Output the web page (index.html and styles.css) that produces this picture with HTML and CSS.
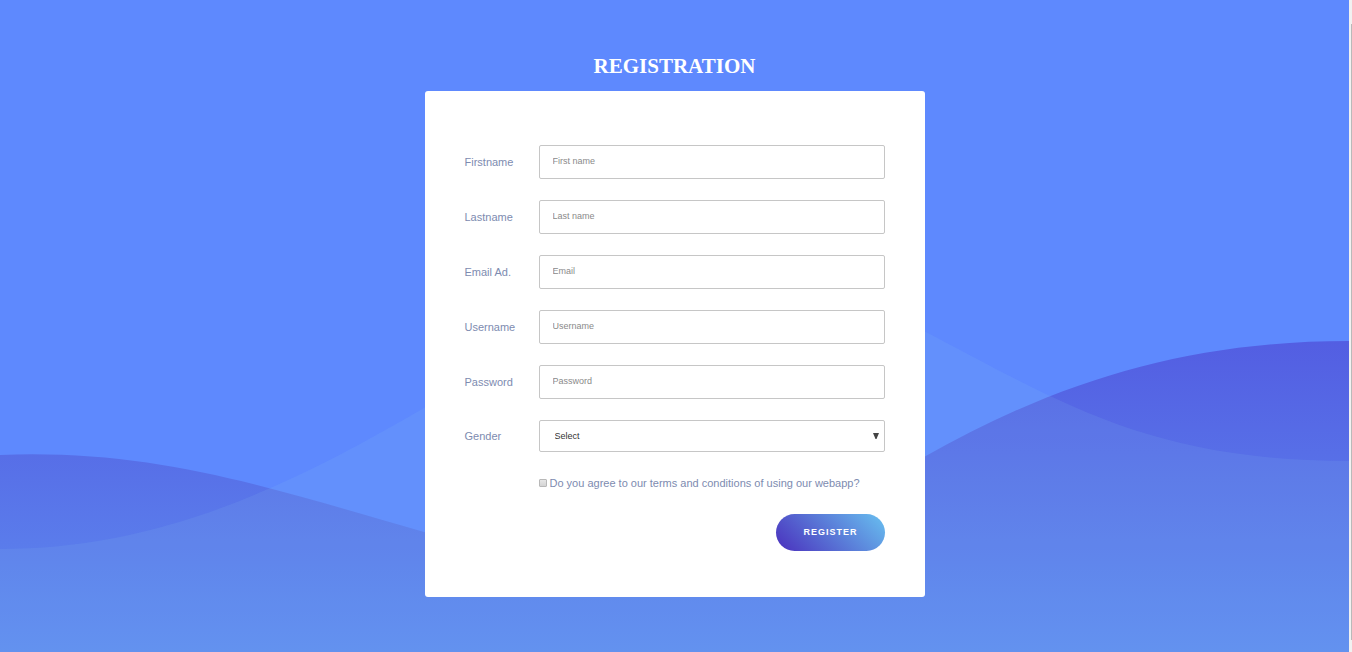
FILE: index.html
```
<!DOCTYPE html>
<html lang="en">
<head>
<meta charset="utf-8">
<meta name="viewport" content="width=device-width, initial-scale=1">
<title>Registration</title>
<link rel="stylesheet" href="styles.css">
</head>
<body>
<div class="page">
  <svg class="waves" viewBox="0 0 1349 652" preserveAspectRatio="none" aria-hidden="true">
    <defs>
      <linearGradient id="deep" gradientUnits="userSpaceOnUse" x1="0" y1="341" x2="0" y2="652">
        <stop offset="0" stop-color="#535ee2"/>
        <stop offset="1" stop-color="#5e8bf0"/>
      </linearGradient>
    </defs>
    <path fill="url(#deep)" d="M0 455C155 449 267 487 424 532C600 590 760 560 924 457C1060 380 1190 341 1349 341V652H0Z"/>
    <path fill="#8cc8f0" fill-opacity=".12" d="M0 549C160 549 290 486 424 408C600 290 750 240 924 331C1060 402 1150 461 1349 461V652H0Z"/>
  </svg>
  <main class="content">
    <h1 class="title">REGISTRATION</h1>
    <form class="card">
      <div class="row">
        <label class="label" for="firstname">Firstname</label>
        <input class="field" id="firstname" type="text" placeholder="First name">
      </div>
      <div class="row">
        <label class="label" for="lastname">Lastname</label>
        <input class="field" id="lastname" type="text" placeholder="Last name">
      </div>
      <div class="row">
        <label class="label" for="email">Email Ad.</label>
        <input class="field" id="email" type="email" placeholder="Email">
      </div>
      <div class="row">
        <label class="label" for="username">Username</label>
        <input class="field" id="username" type="text" placeholder="Username">
      </div>
      <div class="row">
        <label class="label" for="password">Password</label>
        <input class="field" id="password" type="password" placeholder="Password">
      </div>
      <div class="row">
        <label class="label" for="gender">Gender</label>
        <div class="select-wrap">
          <select class="field select" id="gender">
            <option>Select</option>
            <option>Male</option>
            <option>Female</option>
          </select>
          <svg class="arrow" viewBox="0 0 6 6" aria-hidden="true"><path d="M0 0H6L3.5 6H2.5Z"/></svg>
        </div>
      </div>
      <div class="agree">
        <input class="check" id="agree" type="checkbox">
        <label for="agree">Do you agree to our terms and conditions of using our webapp?</label>
      </div>
      <button class="register" type="submit">REGISTER</button>
    </form>
  </main>
</div>
<div class="rail" aria-hidden="true"><div class="thumb"></div></div>
</body>
</html>
```
FILE: styles.css
```
* {
  box-sizing: border-box;
}

body {
  margin: 0;
  min-height: 100vh;
  display: flex;
  font-family: "Liberation Sans", Arial, sans-serif;
  font-size: 11px;
  color: #7d8bb0;
}

.page {
  position: relative;
  flex: 1;
  min-width: 0;
  background: #5e89fe;
}

.waves {
  position: absolute;
  inset: 0;
  width: 100%;
  height: 100%;
}

.content {
  position: relative;
  max-width: 500px;
  margin: 0 auto;
  padding: 54px 0 55px;
}

.title {
  margin: 0 0 13px;
  font: bold 21px/24px "Liberation Serif", "Times New Roman", serif;
  text-align: center;
  color: #fff;
}

.card {
  display: flex;
  flex-direction: column;
  gap: 21px;
  padding: 54px 40px 46px;
  background: #fff;
  border-radius: 3px;
}

.row {
  display: grid;
  grid-template-columns: 74px 1fr;
  align-items: center;
}

.field {
  width: 100%;
  height: 34px;
  padding: 0 13px 2px;
  border: 1px solid #c6c6c6;
  border-radius: 2px;
  background: #fff;
  font: 9px/12px "Liberation Sans", Arial, sans-serif;
  color: #333;
}

.field::placeholder {
  color: #8a8a8a;
  opacity: 1;
}

.select-wrap {
  position: relative;
}

.select {
  display: block;
  height: 32px;
  padding: 0 15px;
  appearance: none;
}

.arrow {
  position: absolute;
  top: 13px;
  right: 6px;
  width: 6px;
  height: 6px;
  fill: #444;
  pointer-events: none;
}

.agree {
  display: flex;
  align-items: center;
  gap: 3px;
  height: 20px;
  padding-left: 74px;
}

.check {
  appearance: none;
  width: 8px;
  height: 8px;
  margin: 0;
  border: 1px solid #b8b8b8;
  border-radius: 1px;
  background: linear-gradient(#e6e6e6, #d4d4d4);
}

.check:checked {
  background: #4b2fbe;
}

.register {
  align-self: flex-end;
  padding: 12px 27px 13px;
  border: 0;
  border-radius: 19px;
  background: linear-gradient(45deg, #4a2fbd, #68c0f0);
  font: bold 9px/12px "Liberation Sans", Arial, sans-serif;
  letter-spacing: 1px;
  color: #fff;
}

.rail {
  flex: none;
  display: flex;
  justify-content: flex-end;
  width: 3px;
  padding: 24px 0 12px;
  background: #f1f1f1;
}

.thumb {
  width: 1px;
  background: #b9b9b9;
}
```
